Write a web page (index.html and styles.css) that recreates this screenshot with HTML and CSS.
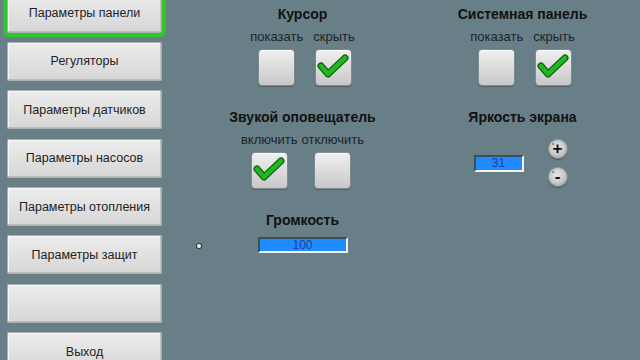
FILE: index.html
```
<!DOCTYPE html>
<html lang="ru">
<head>
<meta charset="utf-8">
<title>Параметры панели</title>
<link rel="stylesheet" href="styles.css">
</head>
<body>
<nav class="sidebar">
  <button class="nav-btn is-active">Параметры панели</button>
  <button class="nav-btn">Регуляторы</button>
  <button class="nav-btn">Параметры датчиков</button>
  <button class="nav-btn">Параметры насосов</button>
  <button class="nav-btn">Параметры отопления</button>
  <button class="nav-btn">Параметры защит</button>
  <button class="nav-btn"></button>
  <button class="nav-btn">Выход</button>
</nav>
<main class="main">
  <section class="group">
    <h2 class="group-title">Курсор</h2>
    <div class="options">
      <div class="option"><span class="opt-label">показать</span><span class="check"></span></div>
      <div class="option"><span class="opt-label">скрыть</span><span class="check is-on"><svg viewBox="0 0 37 37"><polyline class="ck-out" points="6,17 13,25 30,9"/><polyline class="ck-in" points="6,17 13,25 30,9"/></svg></span></div>
    </div>
  </section>
  <section class="group">
    <h2 class="group-title">Системная панель</h2>
    <div class="options">
      <div class="option"><span class="opt-label">показать</span><span class="check"></span></div>
      <div class="option"><span class="opt-label">скрыть</span><span class="check is-on"><svg viewBox="0 0 37 37"><polyline class="ck-out" points="6,17 13,25 30,9"/><polyline class="ck-in" points="6,17 13,25 30,9"/></svg></span></div>
    </div>
  </section>
  <section class="group">
    <h2 class="group-title">Звукой оповещатель</h2>
    <div class="options options-wide">
      <div class="option"><span class="opt-label">включить</span><span class="check is-on"><svg viewBox="0 0 37 37"><polyline class="ck-out" points="6,17 13,25 30,9"/><polyline class="ck-in" points="6,17 13,25 30,9"/></svg></span></div>
      <div class="option"><span class="opt-label">отключить</span><span class="check"></span></div>
    </div>
  </section>
  <section class="group">
    <h2 class="group-title">Яркость экрана</h2>
    <div class="bright-row">
      <div class="field field-small">31</div>
      <div class="stepper">
        <span class="round-btn"><span class="rb-mark"></span>+</span>
        <span class="round-btn"><span class="rb-mark"></span>-</span>
      </div>
    </div>
  </section>
  <section class="group">
    <h2 class="group-title">Громкость</h2>
    <div class="field field-wide">100</div>
  </section>
  <span class="dot"></span>
</main>
</body>
</html>
```
FILE: styles.css
```
* { box-sizing: border-box; }
html, body { margin: 0; padding: 0; }
body {
  width: 640px;
  height: 360px;
  overflow: hidden;
  background: #687f87;
  display: flex;
  font-family: "Liberation Sans", Arial, sans-serif;
  color: #1c1c1c;
}
.sidebar {
  width: 170px;
  flex: none;
  display: flex;
  flex-direction: column;
  gap: 9.4px;
  padding-left: 7px;
  margin-top: -6.5px;
}
.nav-btn {
  width: 155px;
  height: 39px;
  flex: none;
  border: 1px solid #a9b0b2;
  border-radius: 1px;
  background: linear-gradient(#ececec, #d6d6d6);
  box-shadow: inset -1px -1px 0 #bdbdbd, inset 1px 1px 0 #f7f7f7;
  font-family: "Liberation Sans", Arial, sans-serif;
  font-size: 12.5px;
  color: #222;
  padding: 0;
}
.nav-btn.is-active {
  outline: 4px solid #2cc62a;
  outline-offset: 0;
}
.main {
  position: relative;
  flex: 1;
  display: grid;
  grid-template-columns: 205px 205px;
  column-gap: 15px;
  row-gap: 22px;
  align-content: start;
  padding: 5px 0 0 30px;
}
.group {
  display: flex;
  flex-direction: column;
  align-items: center;
}
.group-title {
  margin: 0 0 6px;
  font-size: 14px;
  line-height: 18px;
  font-weight: bold;
  color: #111;
}
.options {
  display: flex;
  gap: 10px;
}
.options-wide { gap: 4px; }
.option {
  display: flex;
  flex-direction: column;
  align-items: center;
  gap: 4px;
}
.opt-label {
  font-size: 13px;
  line-height: 16px;
  color: #1c2428;
}
.check {
  width: 37px;
  height: 37px;
  border-radius: 4px;
  border: 1px solid #7f8d92;
  background: linear-gradient(#f0f0f0, #c8c8c8);
  box-shadow: inset 0 1px 0 #fff, 0 1px 1px rgba(0,0,0,0.25);
  display: block;
}
.check svg { width: 37px; height: 37px; display: block; margin: -1px; }
.ck-out { fill: none; stroke: #0d5b0d; stroke-width: 7; stroke-linecap: round; stroke-linejoin: round; }
.ck-in { fill: none; stroke: #20b820; stroke-width: 4.5; stroke-linecap: round; stroke-linejoin: round; }
.bright-row {
  display: flex;
  align-items: center;
  gap: 24px;
  margin-top: 7px;
  margin-left: -4px;
}
.field {
  background: #1e8cff;
  border-top: 2px solid #3d4f56;
  border-left: 2px solid #3d4f56;
  border-bottom: 2px solid #f2f2f2;
  border-right: 2px solid #f2f2f2;
  color: #1f3f9c;
  font-size: 12px;
  text-align: center;
  display: flex;
  align-items: center;
  justify-content: center;
}
.field-small { width: 50px; height: 17px; }
.field-wide { width: 90px; height: 16px; margin-top: 2px; }
.stepper {
  display: flex;
  flex-direction: column;
  gap: 8px;
}
.round-btn {
  position: relative;
  width: 20px;
  height: 20px;
  border-radius: 50%;
  background: radial-gradient(circle at 45% 40%, #e6e6e6 0%, #c4c6c7 50%, #7f8689 100%);
  box-shadow: 0 1px 1px rgba(0,0,0,0.35), inset 0 0 0 1px rgba(70,80,85,0.4);
  font-size: 17px;
  line-height: 20px;
  font-weight: bold;
  text-align: center;
  color: #111;
  display: block;
}
.rb-mark {
  position: absolute;
  left: 3px;
  top: 3px;
  width: 4px;
  height: 4px;
  background: #8d9699;
  border: 1px solid #c9cfd1;
}
.dot {
  position: absolute;
  left: 27px;
  top: 244px;
  width: 4px;
  height: 4px;
  border-radius: 50%;
  background: #f4f4f4;
  box-shadow: 0 0 0 1px #2f3b40;
}
```
